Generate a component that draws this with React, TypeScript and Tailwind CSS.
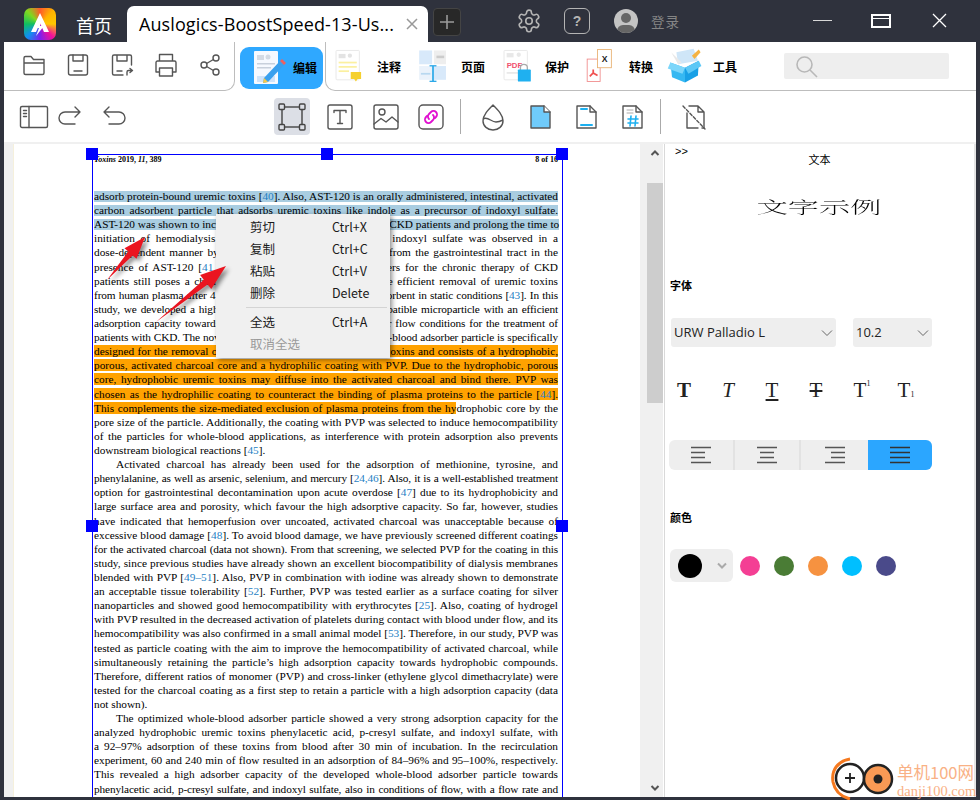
import React from "react";

const CJK = "font-['Noto_Sans_CJK_SC','Liberation_Sans',sans-serif]";

type Line = { t: string; hl?: "b" | "o"; hlEnd?: string; plain?: boolean; indent?: boolean; tight?: boolean };

const lines: Line[] = [
  { t: "adsorb protein-bound uremic toxins [40].  Also, AST-120 is an orally administered, intestinal, activated", hl: "b" },
  { t: "carbon adsorbent particle that adsorbs uremic toxins like indole as a precursor of indoxyl sulfate.", hl: "b" },
  { t: "AST-120 was shown to increase the mean survival of predialysis CKD patients and prolong the time to", hl: "b" },
  { t: "initiation of hemodialysis therapy, and a reduction in serum indoxyl sulfate was observed in a" },
  { t: "dose-dependent manner by reducing its uptake and absorption from the gastrointestinal tract in the" },
  { t: "presence of AST-120 [41,42]. Although in use as oral adsorbers for the chronic therapy of CKD" },
  { t: "patients still poses a challenge, and there is a real need for the efficient removal of uremic toxins" },
  { t: "from human plasma after 4 h of treatment was limited for the adsorbent in static conditions [43].  In this", tight: true },
  { t: "study, we developed a highly porous and particularly blood-compatible microparticle with an efficient", tight: true },
  { t: "adsorption capacity towards the hydrophobic uremic toxins under flow conditions for the treatment of", tight: true },
  { t: "patients with CKD. The novel and highly effective polymer whole-blood adsorber particle is specifically", tight: true },
  { t: "designed for the removal of hydrophobic protein-bound uremic toxins and consists of a hydrophobic,", hl: "o" },
  { t: "porous, activated charcoal core and a hydrophilic coating with PVP. Due to the hydrophobic, porous", hl: "o" },
  { t: "core, hydrophobic uremic toxins may diffuse into the activated charcoal and bind there.  PVP was", hl: "o" },
  { t: "chosen as the hydrophilic coating to counteract the binding of plasma proteins to the particle [44].", hl: "o" },
  { t: "This complements the size-mediated exclusion of plasma proteins from the hy", hl: "o", hlEnd: "drophobic core by the" },
  { t: "pore size of the particle.  Additionally, the coating with PVP was selected to induce hemocompatibility" },
  { t: "of the particles for whole-blood applications, as interference with protein adsorption also prevents" },
  { t: "downstream biological reactions [45].", plain: true },
  { t: "Activated charcoal has already been used for the adsorption of methionine, tyrosine, and", indent: true },
  { t: "phenylalanine, as well as arsenic, selenium, and mercury [24,46].  Also, it is a well-established treatment", tight: true },
  { t: "option for gastrointestinal decontamination upon acute overdose [47] due to its hydrophobicity and" },
  { t: "large surface area and porosity, which favour the high adsorptive capacity. So far, however, studies" },
  { t: "have indicated that hemoperfusion over uncoated, activated charcoal was unacceptable because of" },
  { t: "excessive blood damage [48].  To avoid blood damage, we have previously screened different coatings" },
  { t: "for the activated charcoal (data not shown).  From that screening, we selected PVP for the coating in this", tight: true },
  { t: "study, since previous studies have already shown an excellent biocompatibility of dialysis membranes" },
  { t: "blended with PVP [49–51].  Also, PVP in combination with iodine was already shown to demonstrate" },
  { t: "an acceptable tissue tolerability [52].  Further, PVP was tested earlier as a surface coating for silver" },
  { t: "nanoparticles and showed good hemocompatibility with erythrocytes [25].  Also, coating of hydrogel" },
  { t: "with PVP resulted in the decreased activation of platelets during contact with blood under flow, and its" },
  { t: "hemocompatibility was also confirmed in a small animal model [53].  Therefore, in our study, PVP was" },
  { t: "tested as particle coating with the aim to improve the hemocompatibility of activated charcoal, while" },
  { t: "simultaneously retaining the particle’s high adsorption capacity towards hydrophobic compounds." },
  { t: "Therefore, different ratios of monomer (PVP) and cross-linker (ethylene glycol dimethacrylate) were" },
  { t: "tested for the charcoal coating as a first step to retain a particle with a high adsorption capacity (data" },
  { t: "not shown).", plain: true },
  { t: "The optimized whole-blood adsorber particle showed a very strong adsorption capacity for the", indent: true },
  { t: "analyzed hydrophobic uremic toxins phenylacetic acid, p-cresyl sulfate, and indoxyl sulfate, with" },
  { t: "a 92–97% adsorption of these toxins from blood after 30 min of incubation.  In the recirculation" },
  { t: "experiment, 60 and 240 min of flow resulted in an adsorption of 84–96% and 95–100%, respectively." },
  { t: "This revealed a high adsorber capacity of the developed whole-blood adsorber particle towards" },
  { t: "phenylacetic acid, p-cresyl sulfate, and indoxyl sulfate, also in conditions of flow, with a flow rate and", tight: true },
];

function Refs({ text }: { text: string }) {
  const parts = text.split(/(\[[^\]]+\])/);
  return (
    <>
      {parts.map((p, i) =>
        p.startsWith("[") ? (
          <React.Fragment key={i}>
            [<span className="text-[#1f7fc4]">{p.slice(1, -1)}</span>]
          </React.Fragment>
        ) : (
          <React.Fragment key={i}>{p}</React.Fragment>
        )
      )}
    </>
  );
}

function DocLine({ l }: { l: Line }) {
  const hlClass =
    l.hl === "b"
      ? "bg-[linear-gradient(#a9cde1,#a9cde1)] bg-no-repeat bg-center bg-[length:100%_11px]"
      : l.hl === "o"
        ? "bg-[linear-gradient(#ffa200,#ffa200)] bg-no-repeat bg-center bg-[length:100%_13px]"
        : "";
  return (
    <div
      className={`h-[14.12px] leading-[14.12px] whitespace-nowrap ${l.plain ? "text-left" : "text-justify [text-align-last:justify]"} ${l.indent ? "pl-[22px]" : ""} ${l.tight ? "tracking-[-0.12px]" : ""}`}
    >
      <span className={hlClass}>
        <Refs text={l.t} />
      </span>
      {l.hlEnd}
    </div>
  );
}

const I = ({ children, w = 28, h = 28, vb = "0 0 28 28", className = "" }: { children: React.ReactNode; w?: number; h?: number; vb?: string; className?: string }) => (
  <svg width={w} height={h} viewBox={vb} fill="none" stroke="#555" strokeWidth={1.4} strokeLinejoin="round" strokeLinecap="round" className={className}>
    {children}
  </svg>
);

const Logo = () => (
  <div className="w-8 h-8 rounded-[7px] bg-[conic-gradient(from_0deg,#ff5a2a,#ffb400,#ffc800,#f0109a,#7a20f0,#1090f0,#10c060,#80d820,#ff5a2a)] flex items-center justify-center">
    <svg width="24" height="26" viewBox="0 0 24 26">
      <path d="M12 2 L3 21 L8 21 L12 12 L16 21 L21 21 Z" fill="#fff" />
      <path d="M13 10 L7 17 L11 17 L8 25 L16 15 L12 15 Z" fill="#fff" />
    </svg>
  </div>
);

const DocBase = ({ children }: { children?: React.ReactNode }) => (
  <svg width="44" height="44" viewBox="0 0 44 44">
    <rect x="7" y="4" width="27" height="34" rx="1" fill="#fff" stroke="#e6e6e6" />
    {children}
  </svg>
);

const EditIcon = () => (
  <svg width="36" height="36" viewBox="0 0 36 36">
    <rect x="3" y="1" width="24" height="33" rx="1" fill="#f6f9ff" />
    <rect x="6" y="5" width="7" height="5" fill="#d4dae4" />
    <circle cx="17" cy="7" r="2.5" fill="#d4dae4" />
    <rect x="6" y="13" width="18" height="1.5" fill="#c8d0dc" />
    <rect x="6" y="17" width="14" height="1.5" fill="#c8d0dc" />
    <rect x="6" y="26" width="18" height="6" fill="#cfe3fa" />
    <path d="M13 28 L29 11 L33 15 L17 32 L12 33 Z" fill="#3aa0ee" />
    <path d="M29 11 L31 9 L35 13 L33 15 Z" fill="#f06060" />
    <path d="M13 28 L12 33 L17 32 Z" fill="#f7c948" />
  </svg>
);

const AnnotIcon = () => (
  <DocBase>
    <rect x="10" y="8" width="8" height="5" fill="#e3e3e3" />
    <circle cx="23" cy="10" r="2.5" fill="#e3e3e3" />
    <rect x="10" y="17" width="21" height="2" fill="#fbf0a0" />
    <rect x="10" y="22" width="21" height="2" fill="#fbf0a0" />
    <rect x="10" y="27" width="12" height="2" fill="#fbf0a0" />
    <path d="M24 29 H36 V37 H32 L30 40 L28 37 H24 Z" fill="#f5d02f" />
  </DocBase>
);

const PageIcon = () => (
  <svg width="44" height="44" viewBox="0 0 44 44">
    <rect x="6" y="4" width="15" height="16" fill="#d8e9fa" />
    <rect x="23" y="4" width="14" height="16" fill="#eee" />
    <rect x="26" y="10" width="9" height="3" fill="#ccc" />
    <rect x="6" y="22" width="15" height="16" fill="#eaf2fb" />
    <rect x="8" y="30" width="11" height="2" fill="#b8d8f0" />
    <rect x="23" y="22" width="14" height="16" fill="#d8e9fa" />
    <rect x="21" y="22" width="2" height="18" fill="#2aa8e8" />
    <rect x="18" y="21" width="8" height="1.5" fill="#2aa8e8" />
    <rect x="18" y="39" width="8" height="1.5" fill="#2aa8e8" />
  </svg>
);

const ProtectIcon = () => (
  <DocBase>
    <rect x="10" y="7" width="8" height="5" fill="#e8e8e8" />
    <circle cx="24" cy="9" r="2.5" fill="#e8e8e8" />
    <text x="10" y="24" fontSize="9" fontWeight="700" fontFamily="Liberation Sans" fill="#f0506e" stroke="none">PDF</text>
    <rect x="10" y="29" width="14" height="2" fill="#e8e8e8" />
    <path d="M26 27 v-3 a4 4 0 0 1 8 0 v3" stroke="#aaa" strokeWidth="1.5" fill="none" />
    <rect x="23" y="26" width="15" height="14" rx="1" fill="#1fb0f0" />
  </DocBase>
);

const ConvertIcon = () => (
  <svg width="44" height="44" viewBox="0 0 44 44">
    <rect x="6" y="14" width="15" height="26" fill="#fff" stroke="#f08a8a" />
    <path d="M13 26 L13 30 M13 30 L9 34 M13 30 L18 33" stroke="#f05050" strokeWidth="2" fill="none" />
    <rect x="18" y="3" width="16" height="21" fill="#fff" stroke="#e8b070" />
    <text x="23" y="17" fontSize="10" fontWeight="700" fontFamily="Liberation Sans" fill="#222">X</text>
  </svg>
);

const ToolIcon = () => (
  <svg width="44" height="44" viewBox="0 0 44 44">
    <path d="M12 6 L32 2 L37 16 L14 20 Z" fill="#cfe6f8" />
    <path d="M6 6 L18 18 L14 20 Z" fill="#e8e8e8" />
    <path d="M30 10 L38 3 L40 6 L33 14 Z" fill="#f5b342" />
    <path d="M5 18 L22 24 L22 41 L7 35 Z" fill="#35b8f2" />
    <path d="M22 24 L38 16 L37 33 L22 41 Z" fill="#18a0e6" />
    <path d="M5 18 L2 25 L19 31 L22 24 Z" fill="#7cd6fa" />
    <path d="M38 16 L41 22 L26 31 L22 24 Z" fill="#5cc8f6" />
  </svg>
);

const TopTab = ({ icon, label }: { icon: React.ReactNode; label: string }) => (
  <div className="flex items-center w-[84px]">
    <div className="w-[38px] flex justify-center">{icon}</div>
    <span className={`ml-[9px] mt-[1px] text-[12px] font-bold text-black ${CJK}`}>{label}</span>
  </div>
);

const Handle = ({ className }: { className: string }) => <div className={`absolute w-3 h-3 bg-[#0000ff] ${className}`} />;

const MenuRow = ({ a, b, dim }: { a: string; b?: string; dim?: boolean }) => (
  <div className={`h-[22px] flex items-center text-[12.5px] ${dim ? "text-[#9a9a9a]" : "text-[#1a1a1a]"} ${CJK}`}>
    <span className="ml-[34px] w-[82px]">{a}</span>
    <span>{b}</span>
  </div>
);

const AlignIcon = ({ kind, dark }: { kind: "l" | "c" | "r" | "j"; dark?: boolean }) => {
  const c = dark ? "#333" : "#555";
  const short = { l: [0, 14], c: [3, 14], r: [6, 14], j: [0, 20] }[kind];
  return (
    <svg width="20" height="20" viewBox="0 0 20 20" stroke={c} strokeWidth="1.4">
      <path d="M0 2.5 H20" />
      <path d={`M${short[0]} 7.5 H${short[0] + short[1]}`} />
      <path d={`M${short[0]} 12.5 H${short[0] + short[1]}`} />
      <path d="M0 17.5 H20" />
    </svg>
  );
};

const TBtn = ({ children }: { children: React.ReactNode }) => (
  <div className="w-[44px] flex justify-center font-['Liberation_Serif',serif] text-[21px] leading-6 text-[#222]">{children}</div>
);

export default function App() {
  return (
    <div className="relative w-[980px] h-[800px] bg-[#2f323d] overflow-hidden flex flex-col">
      {/* Title bar */}
      <div className="h-[42px] flex items-start shrink-0">
        <div className="ml-6 mt-2"><Logo /></div>
        <div className={`ml-5 mt-[13px] text-[18px] leading-6 text-white ${CJK}`}>首页</div>
        <div className="ml-[15px] mt-[6px] w-[301px] h-9 bg-white rounded-t-[7px] flex items-center pl-3 pr-2">
          <span className="font-['Open_Sans',sans-serif] text-[18px] text-black whitespace-nowrap tracking-[0.1px]">Auslogics-BoostSpeed-13-Us...</span>
          <svg width="12" height="12" viewBox="0 0 12 12" stroke="#999" strokeWidth="1.5" className="ml-auto mr-[2px]"><path d="M1 1 L11 11 M11 1 L1 11" /></svg>
        </div>
        <div className="ml-[5px] mt-2 w-7 h-7 bg-[#282828] border border-[#444] rounded flex items-center justify-center">
          <svg width="14" height="14" viewBox="0 0 14 14" stroke="#9a9a9a" strokeWidth="1.6"><path d="M7 0 V14 M0 7 H14" /></svg>
        </div>
        <div className="ml-[55px] mt-2">
          <svg width="26" height="26" viewBox="0 0 24 24" fill="none" stroke="#b4b4b4" strokeWidth="1.5" strokeLinejoin="round">
            <path d="M12.2 2h-.4a2 2 0 0 0-2 2v.2a2 2 0 0 1-1 1.7l-.4.3a2 2 0 0 1-2 0l-.2-.1a2 2 0 0 0-2.7.7l-.2.4a2 2 0 0 0 .7 2.7l.2.1a2 2 0 0 1 1 1.7v.5a2 2 0 0 1-1 1.7l-.2.1a2 2 0 0 0-.7 2.7l.2.4a2 2 0 0 0 2.7.7l.2-.1a2 2 0 0 1 2 0l.4.3a2 2 0 0 1 1 1.7v.2a2 2 0 0 0 2 2h.4a2 2 0 0 0 2-2v-.2a2 2 0 0 1 1-1.7l.4-.3a2 2 0 0 1 2 0l.2.1a2 2 0 0 0 2.7-.7l.2-.4a2 2 0 0 0-.7-2.7l-.2-.1a2 2 0 0 1-1-1.7v-.5a2 2 0 0 1 1-1.7l.2-.1a2 2 0 0 0 .7-2.7l-.2-.4a2 2 0 0 0-2.7-.7l-.2.1a2 2 0 0 1-2 0l-.4-.3a2 2 0 0 1-1-1.7V4a2 2 0 0 0-2-2z" />
            <circle cx="12" cy="12" r="3" />
          </svg>
        </div>
        <div className="ml-[22px] mt-2 w-[26px] h-[26px] border-[1.5px] border-[#b4b4b4] rounded-[6px] flex items-center justify-center text-[#b4b4b4] text-[14px] font-bold font-['Liberation_Sans',sans-serif]">?</div>
        <div className="ml-6 mt-[9px] w-6 h-6 rounded-full bg-[#c4c4c4] overflow-hidden relative">
          <div className="absolute left-[7px] top-[4px] w-[10px] h-[10px] rounded-full bg-[#666]" />
          <div className="absolute left-[3px] top-[16px] w-[18px] h-[12px] rounded-full bg-[#666]" />
        </div>
        <div className={`ml-[13px] mt-[11px] text-[13.5px] leading-5 text-[#858585] tracking-[1px] ${CJK}`}>登录</div>
        <div className="ml-[133px] mt-[20px] w-[19px] h-px bg-[#d8d8d8]" />
        <div className="ml-[39px] mt-[14px] w-[20px] h-[14px] border-2 border-white flex flex-col">
          <div className="h-[3px] border-b border-white" />
        </div>
        <svg width="15" height="15" viewBox="0 0 15 15" stroke="#fff" strokeWidth="1.3" className="ml-[41px] mt-[13px]"><path d="M1 1 L14 14 M14 1 L1 14" /></svg>
      </div>

      {/* Content column */}
      <div className="ml-1 mr-1 flex-1 flex flex-col bg-white min-h-0 mb-[3px]">
        {/* Ribbon */}
        <div className="h-[49px] flex shrink-0">
          <div className="w-[231px] border-b border-r border-[#bdbdbd] rounded-br-[10px] flex items-center pl-2 pb-[2px] h-[49px]">
            <div className="w-11 flex justify-center"><I><path d="M4 7 a1.5 1.5 0 0 1 1.5-1.5 H11 l2.5 3 H24 V22 a1.5 1.5 0 0 1-1.5 1.5 H5.5 A1.5 1.5 0 0 1 4 22 Z M4 12 H24" /></I></div>
            <div className="w-11 flex justify-center"><I><rect x="4.5" y="4" width="19" height="20" rx="2" /><path d="M9 4 V10 H19 V4 M10 20 H18" /></I></div>
            <div className="w-11 flex justify-center"><I><path d="M15 24 H6 a1.5 1.5 0 0 1-1.5-1.5 V5.5 A1.5 1.5 0 0 1 6 4 H22 a1.5 1.5 0 0 1 1.5 1.5 V14 M9 4 V10 H19 V4 M9 20 H14 M19 24 V21 a1.5 1.5 0 0 1 1.5-1.5 H24 M22 17.5 L24.5 19.5 L22 21.5" /></I></div>
            <div className="w-11 flex justify-center"><I><path d="M7.5 10 V3.5 H20.5 V10 M7.5 21 H4 V11.5 a1.5 1.5 0 0 1 1.5-1.5 H22.5 A1.5 1.5 0 0 1 24 11.5 V21 H20.5" /><rect x="7.5" y="17" width="13" height="8" /></I></div>
            <div className="w-11 flex justify-center"><I><circle cx="20" cy="7" r="3" /><circle cx="20" cy="21" r="3" /><circle cx="8" cy="14" r="3" /><path d="M10.6 12.5 L17.4 8.5 M10.6 15.5 L17.4 19.5" /></I></div>
          </div>
          <div className="ml-[5px] mt-[5px] w-[83px] h-[42px] rounded-[9px] bg-[#2fa8ff] flex items-center pl-[11px]">
            <EditIcon />
            <span className={`ml-[6px] text-[12px] font-bold text-black ${CJK}`}>编辑</span>
          </div>
          <div className="ml-[2px] flex-1 border-b border-l border-[#bdbdbd] rounded-bl-[10px] flex items-center pl-1 pr-6">
            <TopTab icon={<AnnotIcon />} label="注释" />
            <TopTab icon={<PageIcon />} label="页面" />
            <TopTab icon={<ProtectIcon />} label="保护" />
            <TopTab icon={<ConvertIcon />} label="转换" />
            <TopTab icon={<ToolIcon />} label="工具" />
            <div className="ml-[34px] w-[165px] h-[26px] bg-[#eeeeee] rounded-[2px] flex items-center pl-[11px]">
              <svg width="23" height="23" viewBox="0 0 23 23" fill="none" stroke="#b8b8b8" strokeWidth="1.6"><circle cx="9.5" cy="9.5" r="7.5" /><path d="M15 15 L22 22" /></svg>
            </div>
          </div>
        </div>

        {/* Tool row */}
        <div className="h-[51px] flex items-center pl-3 shrink-0">
          <div className="w-9 flex justify-center"><I w={30} h={30} vb="0 0 30 30"><rect x="1.5" y="4.5" width="27" height="21" rx="1.5" /><path d="M10 4.5 V25.5 M4.5 8.5 H7.5 M4.5 11.5 H7.5 M4.5 14.5 H7.5" /></I></div>
          <div className="w-9 flex justify-center"><I w={26} h={26} vb="0 0 26 26"><path d="M18 20 H8 a6 6 0 0 1 0-12 H23 M18 3 L23 8 L18 13" /></I></div>
          <div className="ml-2 w-9 flex justify-center"><I w={26} h={26} vb="0 0 26 26"><path d="M8 20 H18 a6 6 0 0 0 0-12 H3 M8 3 L3 8 L8 13" /></I></div>
          <div className="ml-[142px] w-9 h-[37px] bg-[#dcdfe6] rounded-[4px] flex items-center justify-center">
            <svg width="28" height="28" viewBox="0 0 28 28" fill="none" stroke="#444" strokeWidth="1.4"><rect x="4" y="4" width="20" height="20" /><rect x="1" y="1" width="5.5" height="5.5" rx="1" fill="#dcdfe6" /><rect x="21.5" y="1" width="5.5" height="5.5" rx="1" fill="#dcdfe6" /><rect x="1" y="21.5" width="5.5" height="5.5" rx="1" fill="#dcdfe6" /><rect x="21.5" y="21.5" width="5.5" height="5.5" rx="1" fill="#dcdfe6" /></svg>
          </div>
          <div className="ml-3 w-9 flex justify-center"><I><rect x="2" y="2" width="24" height="24" rx="2" /><path d="M8 9.5 V7.5 H20 V9.5 M14 7.5 V20.5 M11.5 20.5 H16.5" /></I></div>
          <div className="ml-[10px] w-9 flex justify-center"><I><rect x="2" y="2" width="24" height="24" rx="2" /><circle cx="10" cy="9" r="3" /><path d="M2 21 L9 15.5 L14 19 L20 14 L26 19" /></I></div>
          <div className="ml-[9px] w-9 flex justify-center"><I><rect x="2" y="2" width="24" height="24" rx="4" /><path d="M12 16 a3.5 3.5 0 0 1 0-5 l2-2 a3.5 3.5 0 0 1 5 5 l-1 1 M16 12 a3.5 3.5 0 0 1 0 5 l-2 2 a3.5 3.5 0 0 1-5-5 l1-1" stroke="#e010d0" strokeWidth="1.8" /></I></div>
          <div className="ml-[11px] w-px h-[35px] bg-[#aaaaaa]" />
          <div className="ml-[14px] w-9 flex justify-center"><I><path d="M14 2 C19 7 24 12 24 18 a10 9 0 0 1-20 0 C4 12 9 7 14 2 Z M4 16 C9 13 12 19 17 19 C20 19 22 18 24 17" /></I></div>
          <div className="ml-[11px] w-9 flex justify-center"><I><path d="M5 3 H18 L24 9 V25 H5 Z" fill="#6fcbfb" /><path d="M18 3 V9 H24" fill="#fff" /></I></div>
          <div className="ml-[10px] w-9 flex justify-center"><I><path d="M5 3 H18 L24 9 V25 H5 Z" /><path d="M18 3 V9 H24" /><path d="M9 6 H15 M9 22 H20" stroke="#1db0f0" strokeWidth="2" /></I></div>
          <div className="ml-[10px] w-9 flex justify-center"><I><path d="M5 3 H18 L24 9 V25 H5 Z" /><path d="M18 3 V9 H24" /><path d="M9 7 H15 M9 10 H15" stroke="#aaa" strokeWidth="1" /><path d="M13 13 L12 23 M18 13 L17 23 M10 16 H20 M10 20 H20" stroke="#1db0f0" strokeWidth="1.6" /></I></div>
          <div className="ml-[10px] w-px h-[35px] bg-[#aaaaaa]" />
          <div className="ml-[15px] w-9 flex justify-center"><I><path d="M7 10 V25 H18 M22 25 H24 V9 L18 3 H9 M18 3 V9 H24" /><path d="M3 3 L25 26" strokeDasharray="3 2" /></I></div>
        </div>
        <div className="h-[2px] bg-[#f0f0f0] shrink-0" />

        {/* Body */}
        <div className="flex-1 flex min-h-0">
          <div className="w-[9px] bg-[#f0f0f0]" />
          <div className="w-px bg-[#f5f0dc]" />
          <div className="relative w-[626px] bg-white overflow-hidden">
            <div className="pl-[80px] pr-[82px] pt-[11px] font-['Liberation_Serif',serif] text-black">
              <div className="h-[10px] flex justify-between text-[8px] leading-[10px] font-bold">
                <span><i>Toxins</i> 2019, <i>11</i>, 389</span>
                <span>8 of 16</span>
              </div>
              <div className="mt-[24px] text-[11.3px]">
                {lines.map((l, i) => (
                  <DocLine key={i} l={l} />
                ))}
              </div>
            </div>

            {/* selection box */}
            <div className="absolute left-[78px] top-[10px] w-[471px] h-[800px] border border-[#0000ff]" />
            <Handle className="left-[72px] top-[4px]" />
            <Handle className="left-[307px] top-[4px]" />
            <Handle className="left-[542px] top-[4px]" />
            <Handle className="left-[72px] top-[376px]" />
            <Handle className="left-[542px] top-[376px]" />

            {/* context menu */}
            <div className="absolute left-[202px] top-[70px] w-[174px] h-[144px] bg-[#f0f0f0] shadow-[2px_2px_5px_rgba(0,0,0,0.45)] pt-[2px]">
              <MenuRow a="剪切" b="Ctrl+X" />
              <MenuRow a="复制" b="Ctrl+C" />
              <MenuRow a="粘贴" b="Ctrl+V" />
              <MenuRow a="删除" b="Delete" />
              <div className="ml-[30px] mr-[3px] my-[3px] h-px bg-[#d4d4d4]" />
              <MenuRow a="全选" b="Ctrl+A" />
              <MenuRow a="取消全选" dim />
            </div>

            {/* arrows */}
            <svg width="240" height="150" viewBox="0 0 240 150" className="absolute left-[72px] top-[76px] drop-shadow-[3px_3px_2px_rgba(0,0,0,0.45)]">
              <path d="M21 60 L42.3 31.5 L38.5 28.2 L59 17 L50.5 38.8 L46.7 35.5 Z" fill="#ea1520" />
              <path d="M70 102 L117.8 59.8 L114.1 55.1 L140 46 L125.3 69.1 L121.6 64.4 Z" fill="#ea1520" />
            </svg>
          </div>
          <div className="w-[7px] bg-[#f0f0f0]" />
          {/* scrollbar */}
          <div className="w-[16px] bg-[#f0f0f0] flex flex-col">
            <div className="h-[39px] flex justify-center pt-[5px]">
              <svg width="10" height="8" viewBox="0 0 10 8" fill="none" stroke="#555" strokeWidth="2"><path d="M1.5 6 L5 2.5 L8.5 6" /></svg>
            </div>
            <div className="h-[220px] bg-[#cdcdcd]" />
            <div className="flex-1 flex items-end justify-center pb-[5px]">
              <svg width="10" height="8" viewBox="0 0 10 8" fill="none" stroke="#555" strokeWidth="2"><path d="M1.5 2 L5 5.5 L8.5 2" /></svg>
            </div>
          </div>
          <div className="w-[1px]" />
          <div className="w-[1px] bg-[#d9d9d9]" />

          {/* Right panel */}
          <div className={`flex-1 pl-[5px] flex flex-col border-r-2 border-[#e4e4e4] text-black ${CJK}`}>
            <div className="h-6 grid grid-cols-[1fr_auto_1fr] text-[11px]">
              <span className="pl-[5px] text-[11px] leading-[15px] font-['Liberation_Sans',sans-serif]">&gt;&gt;</span>
              <span className="pt-[7px] leading-[17px] pr-[5px]">文本</span>
              <span />
            </div>
            <div className="mt-6 h-[30px] flex justify-center items-center pr-[5px]">
              <span className="text-[16px] font-extralight scale-x-[1.95] whitespace-nowrap font-['Noto_Serif_CJK_SC','Noto_Sans_CJK_SC',serif]">文字示例</span>
            </div>
            <div className="mt-[55px] h-4 text-[11px] leading-4 font-bold">字体</div>
            <div className="mt-[25px] h-[29px] flex">
              <div className="ml-[1px] w-[165px] bg-[#eeeeee] rounded-[3px] flex items-center pl-[3px] pr-[2px] text-[13px] font-['Open_Sans',sans-serif] text-[#222]">
                URW Palladio L
                <svg width="12" height="8" viewBox="0 0 12 8" fill="none" stroke="#666" className="ml-auto mr-[1px]"><path d="M1 1.5 L6 6.5 L11 1.5" /></svg>
              </div>
              <div className="ml-[17px] w-[79px] bg-[#eeeeee] rounded-[3px] flex items-center pl-[3px] pr-[2px] text-[13px] font-['Open_Sans',sans-serif] text-[#222]">
                10.2
                <svg width="12" height="8" viewBox="0 0 12 8" fill="none" stroke="#666" className="ml-auto mr-[1px]"><path d="M1 1.5 L6 6.5 L11 1.5" /></svg>
              </div>
            </div>
            <div className="mt-[31px] h-6 flex -ml-[8px]">
              <TBtn><b>T</b></TBtn>
              <TBtn><i>T</i></TBtn>
              <TBtn><span className="underline">T</span></TBtn>
              <TBtn><span className="line-through">T</span></TBtn>
              <TBtn><span className="relative">T<span className="absolute left-full top-[1px] text-[8px] leading-[10px]">1</span></span></TBtn>
              <TBtn><span className="relative">T<span className="absolute left-full bottom-[2px] text-[8px] leading-[10px]">1</span></span></TBtn>
            </div>
            <div className="mt-[38px] h-[30px] w-[263px] -ml-[1px] bg-[#eeeeee] rounded-[6px] flex overflow-hidden">
              <div className="w-[66px] border-r-2 border-[#e2e2e2] flex items-center justify-center"><AlignIcon kind="l" /></div>
              <div className="w-[66px] border-r-2 border-[#e2e2e2] flex items-center justify-center"><AlignIcon kind="c" /></div>
              <div className="w-[67px] flex items-center justify-center"><AlignIcon kind="r" /></div>
              <div className="flex-1 bg-[#2ba6ff] flex items-center justify-center"><AlignIcon kind="j" dark /></div>
            </div>
            <div className="mt-[39px] h-4 text-[11px] leading-4 font-bold">颜色</div>
            <div className="mt-6 h-[33px] flex items-center">
              <div className="w-[63px] h-[33px] bg-[#eeeeee] rounded-[6px] flex items-center pl-[8px]">
                <div className="w-6 h-6 rounded-full bg-black" />
                <svg width="10" height="7" viewBox="0 0 10 7" fill="none" stroke="#aaa" strokeWidth="2" className="ml-[15px]"><path d="M1 1.5 L5 5.5 L9 1.5" /></svg>
              </div>
              <div className="ml-[7px] w-5 h-5 rounded-full bg-[#f43f94]" />
              <div className="ml-[14px] w-5 h-5 rounded-full bg-[#4a7c35]" />
              <div className="ml-[14px] w-5 h-5 rounded-full bg-[#f69240]" />
              <div className="ml-[14px] w-5 h-5 rounded-full bg-[#00bfff]" />
              <div className="ml-[14px] w-5 h-5 rounded-full bg-[#4a4a8a]" />
            </div>
          </div>
        </div>
      </div>

      {/* Watermark */}
      <div className="absolute left-[830px] top-[756px] flex items-start">
        <svg width="64" height="44" viewBox="0 0 64 44" fill="none">
          <path d="M20 3 C8 5 1 14 3 26 C5 36 12 41 20 43" stroke="#f5791f" strokeWidth="3" />
          <circle cx="20" cy="22" r="14" stroke="#222" strokeWidth="2.5" fill="#fff" />
          <path d="M20 17 V27 M15 22 H25" stroke="#222" strokeWidth="1.8" />
          <circle cx="48" cy="23" r="14" fill="#f99a55" stroke="#222" strokeWidth="2.5" />
          <circle cx="48" cy="23" r="4.5" fill="#222" />
        </svg>
        <div className="ml-[3px] mt-[6px] text-[#f9b185]">
          <div className="text-[16.5px] leading-[20px] whitespace-nowrap font-['Noto_Sans_CJK_SC',sans-serif]">单机100网</div>
          <div className="text-[14.5px] leading-[18px] font-['Liberation_Serif',serif] whitespace-nowrap">danji100.com</div>
        </div>
      </div>
    </div>
  );
}
